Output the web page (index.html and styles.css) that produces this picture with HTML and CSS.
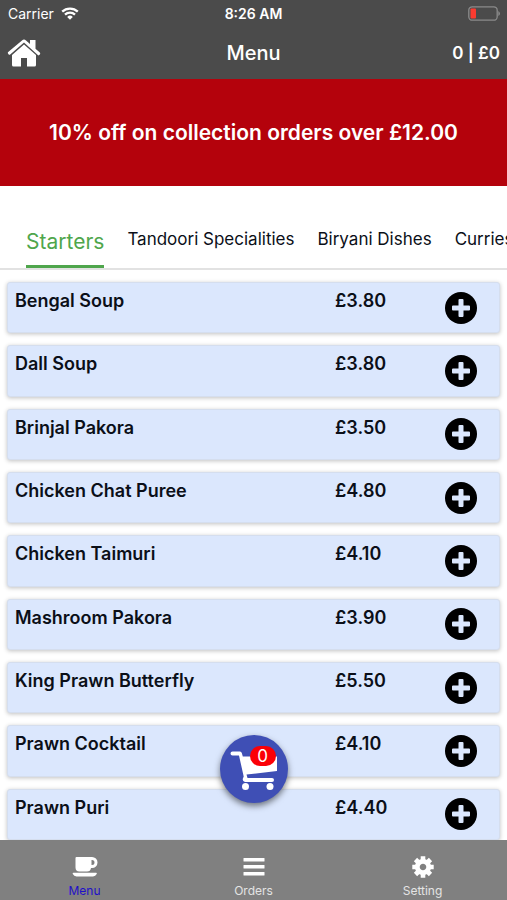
FILE: index.html
```html
<!DOCTYPE html>
<html lang="en">

<head>
    <meta charset="UTF-8">
    <meta name="viewport" content="width=device-width, initial-scale=1.0">
    <title>Menu</title>
    <link rel="stylesheet" href="styles.css">
</head>

<body>
    <!-- Shared icon for the add buttons -->
    <svg class="sprite" aria-hidden="true">
        <symbol id="icon-plus" viewBox="0 0 32 32">
            <circle cx="16" cy="16" r="16" fill="#000" />
            <path d="M14.500 7h3q1 0 1 1v5.500h5.500q1 0 1 1v3q0 1-1 1h-5.500V24q0 1-1 1h-3q-1 0-1-1v-5.500H8q-1 0-1-1v-3q0-1 1-1h5.500V8q0-1 1-1z" fill="#dbe7fd" />
        </symbol>
    </svg>

    <div class="app">
        <header class="header">
            <div class="status-bar">
                <div class="carrier">
                    <span>Carrier</span>
                    <svg width="18" height="13" viewBox="0 0 18 13" fill="none" stroke="#fff" stroke-width="2.300">
                        <path d="M1.200 4.700a11.200 11.200 0 0 1 15.600 0" />
                        <path d="M4 7.700a7.200 7.200 0 0 1 10 0" />
                        <path d="M9 12.700L6.200 9.900a4 4 0 0 1 5.600 0z" fill="#fff" stroke="none" />
                    </svg>
                </div>
                <div class="time">8:26 AM</div>
                <div class="battery">
                    <svg width="32" height="15" viewBox="0 0 32 15">
                        <rect x="0.800" y="0.800" width="28.400" height="13.400" rx="3.500" fill="none" stroke="#8b8b8b" stroke-width="1.300" />
                        <rect x="2.500" y="2.500" width="5.500" height="10" rx="1" fill="#fb3b30" />
                        <path d="M30.300 5q1.700 1 1.700 2.500t-1.700 2.500z" fill="#8b8b8b" />
                    </svg>
                </div>
            </div>
            <div class="title-bar">
                <a class="home" href="#" aria-label="Home">
                    <svg width="34" height="28" viewBox="0 0 34 28" fill="#fff">
                        <path d="M17 0.500Q18 0.500 19 1.400l4 3.500V1h5.500v8.700l4.300 3.900q.8.800.2 1.600l-.7.800q-.8.700-1.500.1L17 3.400 3.200 15.500q-.8.600-1.500-.1l-.7-.8q-.6-.8.200-1.600L15 1.400q1-.9 2-.9z" />
                        <path d="M17 5.500l12 10.600V26q0 1.500-1.500 1.500H20V19h-6v8.500H6.500Q5 27.500 5 26v-9.900z" />
                    </svg>
                </a>
                <h1 class="title">Menu</h1>
                <div class="total">0 | £0</div>
            </div>
        </header>

        <div class="banner">10% off on collection orders over £12.00</div>

        <nav class="tabs">
            <a class="tab active" href="#">Starters</a>
            <a class="tab" href="#">Tandoori Specialities</a>
            <a class="tab" href="#">Biryani Dishes</a>
            <a class="tab" href="#">Curries</a>
        </nav>

        <main class="content">
            <ul class="menu-list">
                <li class="item">
                    <span class="name">Bengal Soup</span>
                    <span class="price">£3.80</span>
                    <button class="add" aria-label="Add Bengal Soup"><svg><use href="#icon-plus" /></svg></button>
                </li>
                <li class="item">
                    <span class="name">Dall Soup</span>
                    <span class="price">£3.80</span>
                    <button class="add" aria-label="Add Dall Soup"><svg><use href="#icon-plus" /></svg></button>
                </li>
                <li class="item">
                    <span class="name">Brinjal Pakora</span>
                    <span class="price">£3.50</span>
                    <button class="add" aria-label="Add Brinjal Pakora"><svg><use href="#icon-plus" /></svg></button>
                </li>
                <li class="item">
                    <span class="name">Chicken Chat Puree</span>
                    <span class="price">£4.80</span>
                    <button class="add" aria-label="Add Chicken Chat Puree"><svg><use href="#icon-plus" /></svg></button>
                </li>
                <li class="item">
                    <span class="name">Chicken Taimuri</span>
                    <span class="price">£4.10</span>
                    <button class="add" aria-label="Add Chicken Taimuri"><svg><use href="#icon-plus" /></svg></button>
                </li>
                <li class="item">
                    <span class="name">Mashroom Pakora</span>
                    <span class="price">£3.90</span>
                    <button class="add" aria-label="Add Mashroom Pakora"><svg><use href="#icon-plus" /></svg></button>
                </li>
                <li class="item">
                    <span class="name">King Prawn Butterfly</span>
                    <span class="price">£5.50</span>
                    <button class="add" aria-label="Add King Prawn Butterfly"><svg><use href="#icon-plus" /></svg></button>
                </li>
                <li class="item">
                    <span class="name">Prawn Cocktail</span>
                    <span class="price">£4.10</span>
                    <button class="add" aria-label="Add Prawn Cocktail"><svg><use href="#icon-plus" /></svg></button>
                </li>
                <li class="item">
                    <span class="name">Prawn Puri</span>
                    <span class="price">£4.40</span>
                    <button class="add" aria-label="Add Prawn Puri"><svg><use href="#icon-plus" /></svg></button>
                </li>
            </ul>
        </main>

        <footer class="footer">
            <!-- Floating cart button -->
            <button class="cart" aria-label="Cart">
                <svg width="48" height="40" viewBox="0 0 48 40" fill="#fff">
                    <path d="M2.500 0.500H10q1.300 0 1.800 1.500l1 3.500H47v14.500L16.500 23.500l1 3.500H42a1.500 1.500 0 0 1 0 4H15q-2.500-.5-2.300-3l1-2.500L9 4.500H2.500a2 2 0 0 1 0-4z" />
                    <circle cx="15.500" cy="35.500" r="3.500" />
                    <circle cx="40" cy="35.500" r="3.500" />
                </svg>
                <span class="badge">0</span>
            </button>
            <a class="nav-item active" href="#">
                <svg width="26" height="22" viewBox="0 0 26 22" fill="#fff">
                    <path fill-rule="evenodd" d="M4.500 1H20a5.500 5.500 0 0 1 0 11h-1q-.5 3.500-4 3.500H7.500Q3.500 15.500 3.500 11.500V2q0-1 1-1zM19.500 4v5H20a2.500 2.500 0 0 0 0-5z" />
                    <path d="M1.500 16.800h22.500q1.300 0 .7 1.300Q23.500 20.500 21 20.500H4.500Q2 20.500 .8 18.100q-.6-1.300.7-1.300z" />
                </svg>
                <span>Menu</span>
            </a>
            <a class="nav-item" href="#">
                <svg width="22" height="22" viewBox="0 0 22 22" fill="#fff">
                    <rect x="0.500" y="2" width="21" height="3.500" rx="0.500" />
                    <rect x="0.500" y="9" width="21" height="3.500" rx="0.500" />
                    <rect x="0.500" y="16" width="21" height="3.500" rx="0.500" />
                </svg>
                <span>Orders</span>
            </a>
            <a class="nav-item" href="#">
                <svg width="22" height="22" viewBox="-11 -11 22 22">
                    <g fill="none" stroke="#fff" stroke-width="4.600" stroke-linejoin="round">
                        <circle r="5.700" stroke-width="4.800" />
                        <path d="M0-7v-3.700M0 7v3.700M-7 0h-3.700M7 0h3.700M-5-5l-2.500-2.500M5 5l2.500 2.500M-5 5l-2.500 2.500M5-5l2.500-2.500" />
                    </g>
                </svg>
                <span>Setting</span>
            </a>
        </footer>
    </div>
</body>

</html>
```
FILE: styles.css
```css
* {
    box-sizing: border-box;
}

body {
    margin: 0;
    font-family: Inter, "Liberation Sans", sans-serif;
    background-color: #fff;
    color: #0b0f18;
}

a {
    color: inherit;
    text-decoration: none;
}

button {
    padding: 0;
    border: none;
    font-family: inherit;
    cursor: pointer;
}

svg {
    display: block;
}

.sprite {
    position: absolute;
    width: 0;
    height: 0;
}

.app {
    display: flex;
    flex-direction: column;
    height: 100vh;
    overflow: hidden;
}

/* Header */
.header {
    flex: none;
    background-color: #4b4b4b;
    color: #fff;
}

.status-bar,
.title-bar {
    display: grid;
    grid-template-columns: 1fr auto 1fr;
    align-items: center;
    padding: 0 7px;
}

.status-bar {
    height: 27px;
    font-size: 14px;
}

.title-bar {
    height: 52px;
}

.carrier {
    display: flex;
    align-items: center;
    gap: 7px;
    padding-left: 1px;
}

.time {
    font-weight: 600;
}

.battery,
.total {
    justify-self: end;
}

.home {
    justify-self: start;
}

.title {
    margin: 0;
    font-size: 20px;
    font-weight: 500;
}

.total {
    font-size: 17px;
    font-weight: 600;
}

/* Offer banner */
.banner {
    flex: none;
    padding: 40px 16px;
    background-color: #b4020c;
    color: #fff;
    font-size: 21px;
    font-weight: 600;
    line-height: 27px;
    text-align: center;
}

/* Category tabs */
.tabs {
    display: flex;
    flex: none;
    gap: 23px;
    padding: 41px 0 0 26px;
    border-bottom: 2px solid #e2e2e2;
    overflow: hidden;
    white-space: nowrap;
}

.tab {
    font-size: 17px;
    line-height: 24px;
}

.tab.active {
    padding-bottom: 8px;
    border-bottom: 3px solid #4fa64c;
    color: #4fa64c;
    font-size: 21px;
    line-height: 30px;
}

/* Dishes */
.content {
    flex: 1;
    min-height: 0;
    overflow: hidden;
}

.menu-list {
    display: grid;
    grid-auto-rows: minmax(48px, 1fr);
    gap: 12px;
    min-height: 100%;
    margin: 0;
    padding: 12px 7px 0;
    list-style: none;
}

.item {
    display: grid;
    grid-template-columns: 1fr 110px 47px;
    padding: 0 7px;
    border: 1px solid #d5deee;
    border-radius: 3px;
    background-color: #dbe7fd;
    box-shadow: 0 1px 4px rgba(0, 0, 0, 0.25);
    font-size: 18px;
    font-weight: 600;
    line-height: 36px;
}

.add {
    align-self: center;
    justify-self: start;
    width: 32px;
    height: 32px;
    border-radius: 50%;
    background: none;
}

.add svg {
    width: 32px;
    height: 32px;
}

/* Bottom navigation */
.footer {
    position: relative;
    display: grid;
    grid-template-columns: repeat(3, 1fr);
    flex: none;
    height: 60px;
    background-color: #808080;
    color: #e4e4e4;
}

.nav-item {
    display: flex;
    flex-direction: column;
    align-items: center;
    gap: 5px;
    padding-top: 16px;
    font-size: 12px;
    line-height: 16px;
}

.nav-item.active {
    color: #1f10c8;
}

.cart {
    position: absolute;
    bottom: 97px;
    left: 50%;
    display: flex;
    align-items: center;
    justify-content: center;
    width: 68px;
    height: 68px;
    margin-left: -34px;
    padding-top: 4px;
    border-radius: 50%;
    background-color: #3f4fb5;
    box-shadow: 0 3px 6px rgba(0, 0, 0, 0.5);
}

.badge {
    position: absolute;
    top: 11px;
    right: 12px;
    width: 26px;
    border-radius: 10px;
    background-color: #fb0007;
    color: #fff;
    font-size: 17px;
    line-height: 20px;
    text-align: center;
}
```
